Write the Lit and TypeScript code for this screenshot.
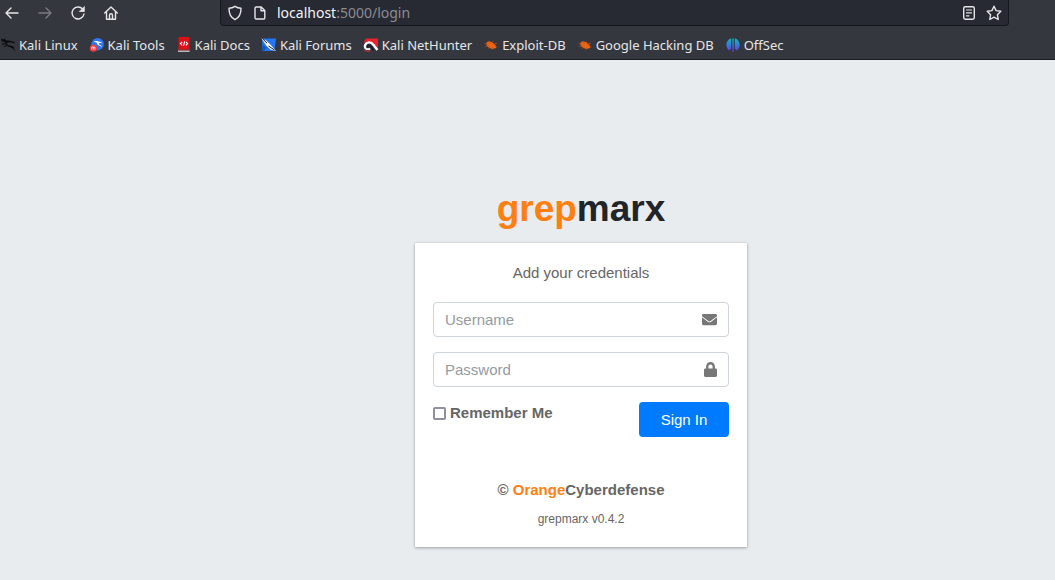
import { LitElement, html, css, svg } from "lit";
import { customElement } from "lit/decorators.js";

const strokeIcon = (body: unknown) => html`
  <svg class="icon" viewBox="0 0 16 16" width="16" height="16" aria-hidden="true">${body}</svg>
`;

const favicon = {
  linux: svg`<path d="M1 1.500l2.500.9L5.800 1l-.9 2L7 3.500c1.800-.2 3.700 0 5.500 1.100l1.700.1.900 1.800-3-.7c-2-.7-4-.6-4.900.2-.7 1 .2 1.900 1.700 2.200 3.300.5 5.500 2 6.400 6.600-1.400-2.700-2.800-4.200-5.800-4.900C6.800 9.400 5.300 8 5.600 6.200 5.500 5 4 4.100 1.800 4.500z" fill="#0b0b0d"/><path d="M2 7.300l3-.9M3.800 9.900l2.400-1.500M11 9.500l3 .8" stroke="#0b0b0d" stroke-width="1.100"/>`,
  tools: svg`<circle cx="8.600" cy="7.200" r="6.200" fill="#2a79f3"/><path d="M4 5.200c2.600-1.900 4.700-1.500 6-.4 1.400 0 2.400.6 3.200 1.400-1.900-.5-3.400-.4-3.500.5 0 1.200 2.800.8 3.600 3.900-1.200-1.500-2.800-1.800-4-2.300C8 7.700 8.200 6.300 7.800 5.700 6.600 4.900 5.200 4.800 4 5.200z" fill="#fff"/><circle cx="4.400" cy="11.200" r="3.600" fill="#f03a40"/><path d="M2.800 9.900v2.800M4.400 9.900v2.800M5.900 9.900v2.800M2.800 10h3" stroke="#fff" stroke-width=".7"/>`,
  docs: svg`<path d="M2.500 0h11v12.500h-11z" fill="#de1015"/><path d="M2 12.500h11.500v2.500H2z" fill="#b9bbc0"/><path d="M2 12.300h11.500v1.200H2z" fill="#8e1418"/><path d="M6.200 4.800L4.500 6.600l1.700 1.800M9.900 4.800l1.700 1.800-1.700 1.800M8.700 4.300L7.500 8.900" stroke="#fff" stroke-width="1.100" fill="none"/>`,
  forums: svg`<path d="M1 1.500h14L13.500 14H1.500z" fill="#2378f2"/><path d="M.5 1.500l5 2.300L10 8.200l5 5.800-5.600-1.600-4-3.600z" fill="#fff"/><path d="M1.500 1.800l4.600 4.400M7.500 9l6 4" stroke="#17191f" stroke-width="1"/><path d="M1.500 7.500l4.300 3L3 14H1.500z" fill="#1758c7"/>`,
  nethunter: svg`<path d="M2.500 1.500H15v9.300L12 9 4 5z" fill="#e8232c"/><path d="M1.500 3L4 2v3L1.500 7z" fill="#e8232c"/><path d="M2.800 11.600C.9 9 2.400 5.800 5.900 5.400c2.300-.2 3.500 1 4.700 2.700l3.800 5" fill="none" stroke="#fff" stroke-width="2.400"/><path d="M4.300 11.300c-.4-2.900 2.200-4 3.700-1.800l2.500 4" fill="none" stroke="#1a1b21" stroke-width="1.500"/><path d="M2.500 12.100h4.700" stroke="#fff" stroke-width="1.900"/><path d="M1.500 14h6" stroke="#e8232c" stroke-width="1"/>`,
  bug: svg`<path d="M3.500 6C4.600 3.900 8 4.200 10.300 6.500c1.800.5 2.900 2.200 2.900 4.600C10.500 12 7 11.900 5.200 9.900 3.700 9.300 3.100 7.600 3.500 6z" fill="#ee6415"/><path d="M1.500 6.400l4 .8M2.200 9.400l4-.6M5.500 4l2 3M9.500 4.500l1 4M5 11.800L7 9.300M9 12.800l.6-3M11.500 6.700l2.500-.5M12 9.500l2.300.6" stroke="#c95212" stroke-width=".7"/>`,
  offsec: svg`<defs><linearGradient id="og" x1="0" y1="0" x2="0" y2="1"><stop offset="0" stop-color="#14b4bd"/><stop offset=".55" stop-color="#3679d8"/><stop offset="1" stop-color="#6a31c6"/></linearGradient></defs><path d="M6.200 1.200v10.600L4 13.400C-.2 10 .6 3 6.200 1.200zM9.800 1.200v10.600l2.200 1.600c4.200-3.400 3.400-10.400-2.200-12.200zM7.300 1.500h1.400V15H7.300z" fill="url(#og)"/>`,
};

const bookmarks: Array<[keyof typeof favicon, string]> = [
  ["linux", "Kali Linux"],
  ["tools", "Kali Tools"],
  ["docs", "Kali Docs"],
  ["forums", "Kali Forums"],
  ["nethunter", "Kali NetHunter"],
  ["bug", "Exploit-DB"],
  ["bug", "Google Hacking DB"],
  ["offsec", "OffSec"],
];

@customElement("browser-chrome")
export class BrowserChrome extends LitElement {
  static styles = css`
    :host {
      display: block;
      background: #35373e;
      border-bottom: 1px solid #1b1c20;
      color: #e6e6e8;
      font: 14px/20px "Noto Sans", sans-serif;
    }
    .toolbar {
      display: flex;
      align-items: flex-start;
    }
    .nav {
      display: flex;
      gap: 17px;
      width: 216px;
      flex: none;
      padding: 5px 0 0 4px;
    }
    button {
      display: block;
      padding: 0;
      border: 0;
      background: none;
      color: inherit;
    }
    button:disabled {
      color: #7b7c81;
    }
    .icon {
      display: block;
      flex: none;
      fill: none;
      stroke: currentColor;
      stroke-width: 1.4;
      stroke-linecap: round;
      stroke-linejoin: round;
    }
    .address {
      flex: 1;
      min-width: 0;
      display: flex;
      align-items: center;
      gap: 9px;
      height: 25px;
      margin-right: 46px;
      padding: 0 6px;
      background: #272933;
      border: 1px solid #17181d;
      border-top: 0;
      border-radius: 0 0 4px 4px;
    }
    .url {
      flex: 1;
      color: #8b8c92;
    }
    .host {
      color: #f4f4f5;
    }
    .bookmarks {
      display: flex;
      gap: 11px;
      height: 20px;
      padding: 9px 0 4px;
      font-size: 13px;
    }
    a {
      display: flex;
      align-items: center;
      gap: 3px;
      color: inherit;
      text-decoration: none;
      white-space: nowrap;
    }
  `;

  render() {
    return html`
      <div class="toolbar">
        <nav class="nav">
          <button aria-label="Back">${strokeIcon(svg`<path d="M14 8H2M7 3L2 8l5 5"/>`)}</button>
          <button aria-label="Forward" disabled>${strokeIcon(svg`<path d="M2 8h12M9 3l5 5-5 5"/>`)}</button>
          <button aria-label="Reload">
            ${strokeIcon(svg`<path d="M14 9A6 6 0 1 1 12.600 4"/><path d="M14.300 1.900v4.600H9.700z" fill="currentColor" stroke-width=".8"/>`)}
          </button>
          <button aria-label="Home">
            ${strokeIcon(svg`<path d="M1.700 8L8 2l6.300 6M3.500 6.700v7.500h9V6.700M6.500 14v-3.700a1.500 1.500 0 0 1 3 0V14"/>`)}
          </button>
        </nav>
        <div class="address">
          ${strokeIcon(svg`<path d="M8 1.300c1.900 1.300 3.900 1.900 6 2 .1 5-1.600 9.200-6 11.400C3.600 12.500 1.900 8.300 2 3.300c2.100-.1 4.100-.7 6-2z"/>`)}
          ${strokeIcon(svg`<path d="M4.200 2h5l3.600 3.600v7.200a1.200 1.200 0 0 1-1.200 1.200H4.200A1.200 1.200 0 0 1 3 12.800V3.200A1.200 1.200 0 0 1 4.200 2zM9 2.200v3.600h3.600"/>`)}
          <span class="url"><span class="host">localhost</span>:5000/login</span>
          <button aria-label="Reader view">
            ${strokeIcon(svg`<rect x="2.700" y="1.800" width="10.600" height="12.400" rx="1.600"/><path d="M5.500 5h5M5.500 7.900h5M5.500 10.800h2.500" stroke-width="1.200"/>`)}
          </button>
          <button aria-label="Bookmark this page">
            ${strokeIcon(svg`<path d="M8 1.200l2.100 4.400 4.700.7-3.400 3.400.8 4.800L8 12.200l-4.200 2.300.8-4.800L1.200 6.300l4.700-.7z"/>`)}
          </button>
        </div>
      </div>
      <nav class="bookmarks" aria-label="Bookmarks">
        ${bookmarks.map(
          ([icon, label]) => html`<a href="#"
            ><svg viewBox="0 0 16 16" width="16" height="16" aria-hidden="true">${favicon[icon]}</svg>${label}</a
          >`
        )}
      </nav>
    `;
  }
}

@customElement("login-card")
export class LoginCard extends LitElement {
  static styles = css`
    :host {
      display: block;
      width: 332px;
      font: 15px/22px "Liberation Sans", Arial, sans-serif;
      color: #666;
    }
    h1 {
      margin: 0 0 11px;
      font-size: 37px;
      line-height: 46px;
      text-align: center;
      color: #212529;
    }
    .orange {
      color: #ff7f11;
    }
    .card {
      padding: 18px;
      background: #fff;
      box-shadow: 0 0 1px rgba(0, 0, 0, 0.2), 0 1px 3px rgba(0, 0, 0, 0.3);
      text-align: center;
    }
    p {
      margin: 0;
    }
    .intro {
      margin: 1px 0 18px;
    }
    .field {
      display: flex;
      align-items: center;
      box-sizing: border-box;
      height: 35px;
      margin-bottom: 15px;
      padding: 0 11px;
      border: 1px solid #ced4da;
      border-radius: 4px;
    }
    .field input {
      flex: 1;
      min-width: 0;
      padding: 0;
      border: 0;
      outline: 0;
      background: none;
      font: inherit;
      color: #495057;
    }
    .field input::placeholder {
      color: #939ba2;
      opacity: 1;
    }
    .field svg {
      display: block;
      fill: #777;
    }
    .actions {
      display: flex;
      justify-content: space-between;
      align-items: flex-start;
    }
    .remember {
      display: flex;
      align-items: center;
      gap: 4px;
      font-weight: bold;
    }
    .remember input {
      appearance: none;
      width: 13px;
      height: 13px;
      margin: 0;
      border: 2px solid #8f8f9d;
      border-radius: 2px;
      background: #fff;
    }
    .remember input:checked {
      background: #007bff;
    }
    .submit {
      width: 90px;
      height: 35px;
      padding: 0;
      border: 0;
      border-radius: 4px;
      background: #007bff;
      color: #fff;
      font: inherit;
    }
    .company {
      margin: 42px 0 8px;
      font-weight: bold;
    }
    .version {
      font-size: 12px;
      line-height: 20px;
    }
  `;

  render() {
    return html`
      <h1><span class="orange">grep</span>marx</h1>
      <div class="card">
        <p class="intro">Add your credentials</p>
        <form @submit=${(e: Event) => e.preventDefault()}>
          <div class="field">
            <input type="text" aria-label="Username" placeholder="Username" />
            <svg viewBox="0 0 512 512" width="15" height="15" aria-hidden="true">
              <path d="M502.300 190.800c3.900-3.100 9.700-.2 9.700 4.700V400c0 26.500-21.500 48-48 48H48c-26.500 0-48-21.500-48-48V195.600c0-5 5.700-7.800 9.700-4.700 22.400 17.400 52.100 39.500 154.100 113.600 21.100 15.400 56.700 47.800 92.200 47.600 35.700.3 72-32.800 92.300-47.600 102-74.100 131.600-96.300 154-113.700zM256 320c23.200.4 56.600-29.200 73.400-41.400 132.700-96.300 142.800-104.700 173.400-128.700 5.800-4.500 9.200-11.500 9.200-18.900v-19c0-26.500-21.500-48-48-48H48c-26.500 0-48 21.500-48 48v19c0 7.400 3.400 14.300 9.200 18.900 30.600 23.900 40.700 32.400 173.400 128.700 16.800 12.200 50.200 41.800 73.400 41.400z" />
            </svg>
          </div>
          <div class="field">
            <input type="password" aria-label="Password" placeholder="Password" />
            <svg viewBox="0 0 448 512" width="13" height="15" aria-hidden="true">
              <path d="M400 224h-24v-72C376 68.200 307.800 0 224 0S72 68.200 72 152v72H48c-26.500 0-48 21.500-48 48v192c0 26.500 21.500 48 48 48h352c26.500 0 48-21.500 48-48V272c0-26.500-21.500-48-48-48zm-104 0H152v-72c0-39.700 32.300-72 72-72s72 32.300 72 72v72z" />
            </svg>
          </div>
          <div class="actions">
            <label class="remember"><input type="checkbox" />Remember Me</label>
            <button class="submit" type="submit">Sign In</button>
          </div>
        </form>
        <p class="company">© <span class="orange">Orange</span>Cyberdefense</p>
        <p class="version">grepmarx v0.4.2</p>
      </div>
    `;
  }
}

@customElement("app-root")
export class AppRoot extends LitElement {
  static styles = css`
    :host {
      display: flex;
      flex-direction: column;
      min-height: 100vh;
      background: #e9ecef;
    }
    main {
      flex: 1;
      display: flex;
      flex-direction: column;
      align-items: center;
      justify-content: center;
      padding: 93px 0 0 107px;
    }
  `;

  render() {
    return html`
      <browser-chrome></browser-chrome>
      <main><login-card></login-card></main>
    `;
  }
}
